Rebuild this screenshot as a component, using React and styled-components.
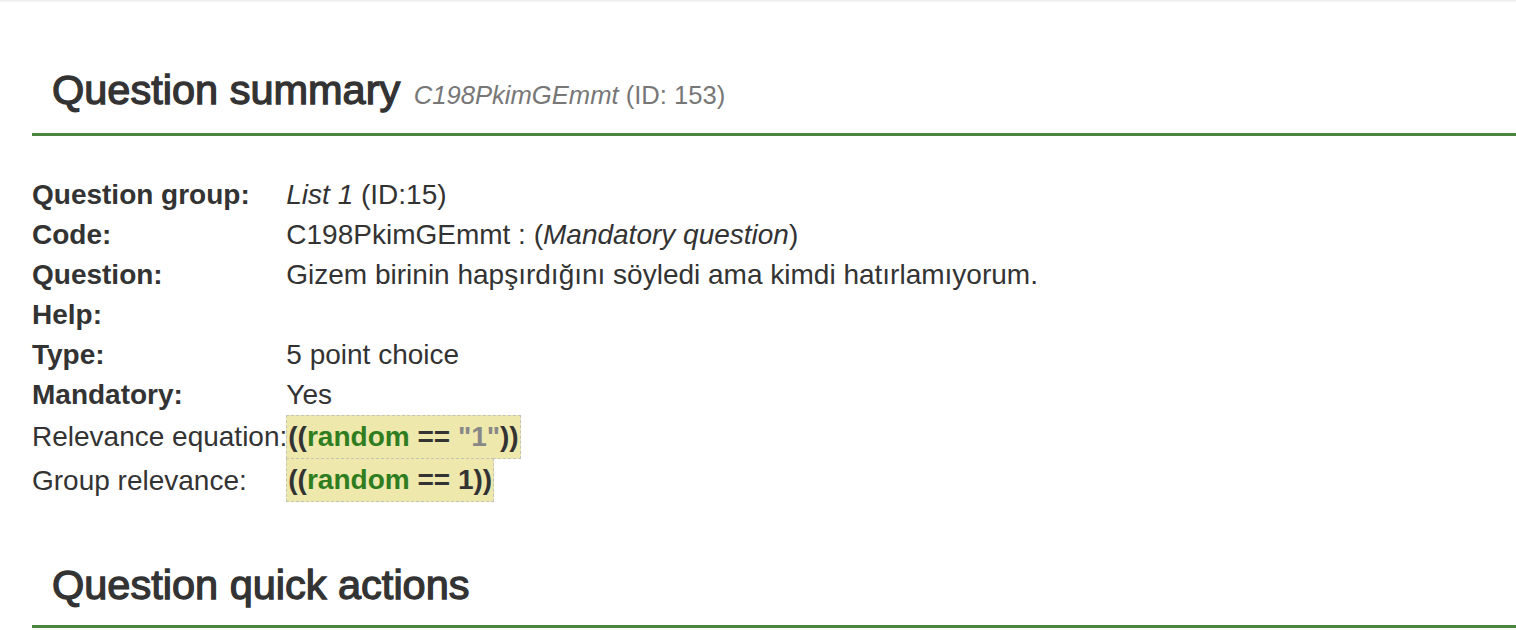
import React from "react";
import styled, { createGlobalStyle } from "styled-components";

const Global = createGlobalStyle`
  html, body { margin: 0; padding: 0; background: #fff; }
  body {
    font-family: "Liberation Sans", Arial, Helvetica, sans-serif;
    color: #333;
    width: 1516px;
    overflow: hidden;
  }
`;

const TopShadow = styled.div`
  height: 3px;
  background: linear-gradient(to bottom, #e9e9e9, #f7f7f7 50%, #fff);
`;

const Page = styled.main`
  padding: 63px 0 0 32px;
`;

const SectionTitle = styled.h3`
  margin: 0;
  padding: 0 0 ${(p) => (p.$last ? "16px" : "14px")} 20px;
  border-bottom: 3px solid #4a853f;
  font-size: 41.5px;
  line-height: 48px;
  font-weight: 400;
  -webkit-text-stroke: 1.3px #333;
  color: #333;
  letter-spacing: 0;
  white-space: nowrap;
`;

const Sub = styled.small`
  font-size: 25.6px;
  font-weight: 400;
  color: #777;
  -webkit-text-stroke: 0;
  letter-spacing: 0;
  margin-left: 2px;
`;

const Ident = styled.em`
  font-style: italic;
`;

const Summary = styled.div`
  display: grid;
  grid-template-columns: max-content 1fr;
  margin: 39px 0 59px;
  font-size: 28px;
  line-height: 40px;
  color: #333;
`;

const Label = styled.div`
  font-weight: ${(p) => (p.$plain ? 400 : 700)};
  align-self: center;
  white-space: nowrap;
`;

const Value = styled.div`
  align-self: center;
  white-space: nowrap;
  margin-left: -1px;
`;

const Code = styled.span`
  display: inline-block;
  vertical-align: top;
  background: #eee8ac;
  border: 1px dashed #c4c4b4;
  padding: 1px 1px;
  font-weight: 700;
  color: #333;
  line-height: 40px;
  margin-top: ${(p) => (p.$stack ? "-1px" : "0")};
`;

const Var = styled.span`
  color: #2f7d21;
`;

const Str = styled.span`
  color: #888;
`;

const rows = [
  { label: "Question group:", value: <><Ident>List 1</Ident> (ID:15)</> },
  { label: "Code:", value: <>C198PkimGEmmt : (<Ident>Mandatory question</Ident>)</> },
  { label: "Question:", value: "Gizem birinin hapşırdığını söyledi ama kimdi hatırlamıyorum." },
  { label: "Help:", value: "\u00a0" },
  { label: "Type:", value: "5 point choice" },
  { label: "Mandatory:", value: "Yes" },
];

export default function App() {
  return (
    <>
      <Global />
      <TopShadow />
      <Page>
        <SectionTitle>
          Question summary{" "}
          <Sub>
            <Ident>C198PkimGEmmt</Ident> (ID: 153)
          </Sub>
        </SectionTitle>
        <Summary>
          {rows.map((r) => (
            <React.Fragment key={r.label}>
              <Label>{r.label}</Label>
              <Value>{r.value}</Value>
            </React.Fragment>
          ))}
          <Label $plain>Relevance equation:</Label>
          <Value>
            <Code>
              ((<Var>random</Var> == <Str>"1"</Str>))
            </Code>
          </Value>
          <Label $plain>Group relevance:</Label>
          <Value>
            <Code $stack>
              ((<Var>random</Var> == 1))
            </Code>
          </Value>
        </Summary>
        <SectionTitle $last>Question quick actions</SectionTitle>
      </Page>
    </>
  );
}
